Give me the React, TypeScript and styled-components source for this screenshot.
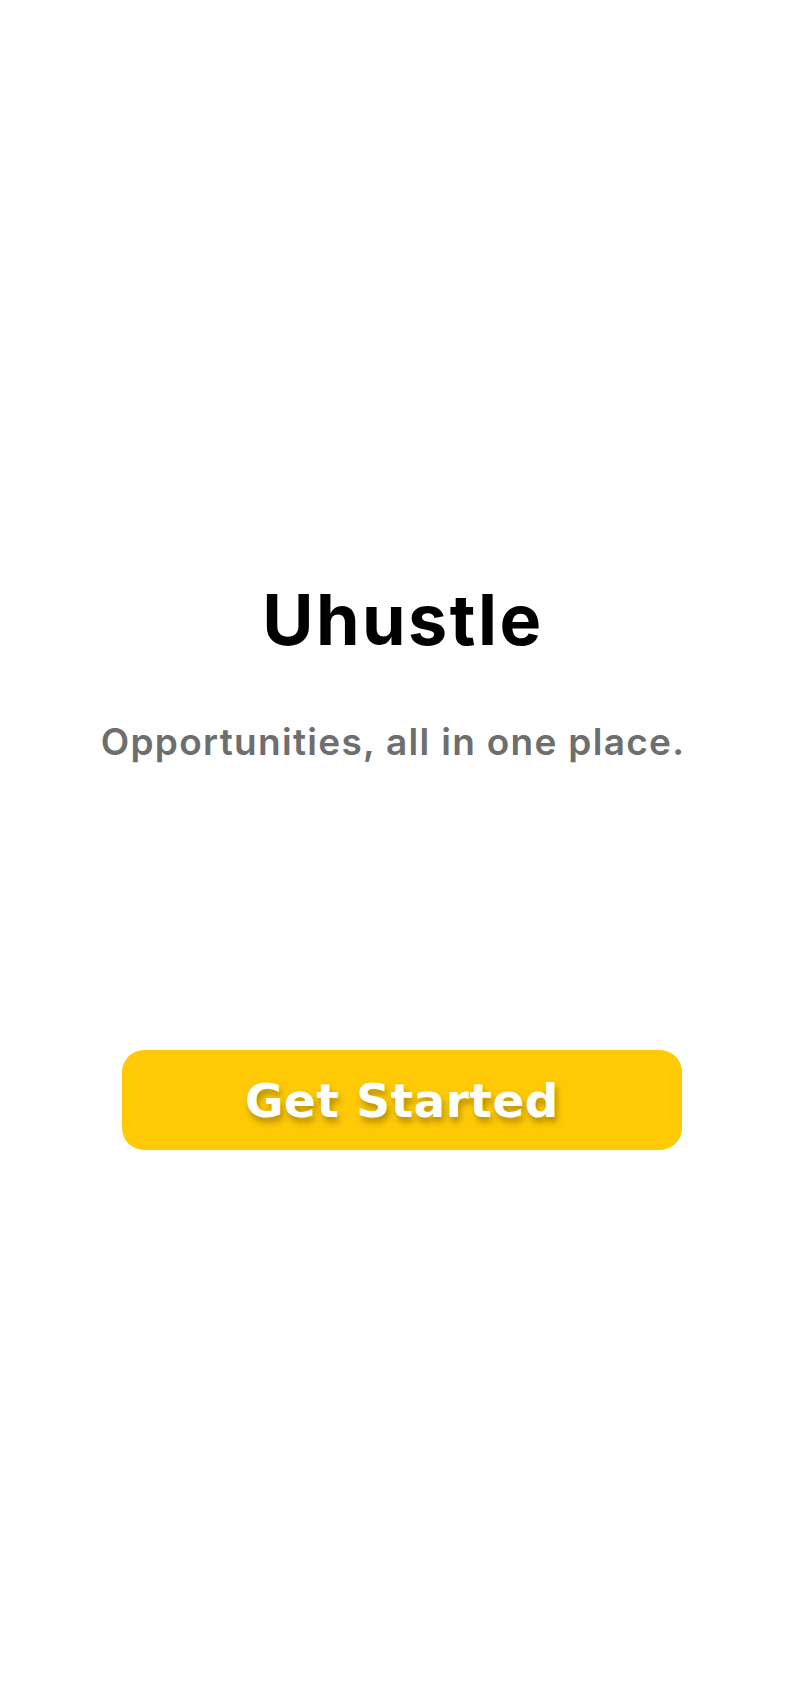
import React from 'react';
import styled, { createGlobalStyle } from 'styled-components';

const GlobalStyle = createGlobalStyle`
  html, body {
    margin: 0;
    padding: 0;
    background: #ffffff;
  }
`;

const Screen = styled.main`
  min-height: 1704px;
  display: flex;
  flex-direction: column;
  align-items: center;
  padding-top: 580px;
  box-sizing: border-box;
`;

const Title = styled.h1`
  margin: 0 0 0 20px;
  font-family: Inter, "Liberation Sans", sans-serif;
  font-weight: 700;
  font-size: 70px;
  line-height: 80px;
  letter-spacing: 2.5px;
  color: #000000;
`;

const Tagline = styled.p`
  margin: 60px 0 0;
  font-family: Inter, "Liberation Sans", sans-serif;
  font-weight: 600;
  font-size: 37px;
  line-height: 44px;
  letter-spacing: 1.3px;
  color: #6e6e6e;
`;

const StartButton = styled.button`
  margin: 286px 0 0 18px;
  width: 560px;
  height: 100px;
  display: flex;
  align-items: center;
  justify-content: center;
  border: none;
  border-radius: 22px;
  background: #ffca05;
  color: #ffffff;
  font-family: "DejaVu Sans", Inter, sans-serif;
  font-weight: 700;
  font-size: 47px;
  letter-spacing: 0.5px;
  text-shadow: 2px 5px 6px rgba(90, 70, 0, 0.45);
  cursor: pointer;
`;

export default function App() {
  return (
    <>
      <GlobalStyle />
      <Screen>
        <Title>Uhustle</Title>
        <Tagline>Opportunities, all in one place.</Tagline>
        <StartButton>Get Started</StartButton>
      </Screen>
    </>
  );
}
